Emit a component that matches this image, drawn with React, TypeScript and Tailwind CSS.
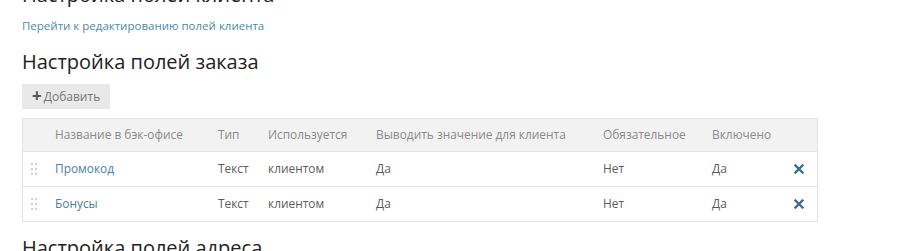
import React from "react";

const rows = [
  { name: "Промокод", type: "Текст", used: "клиентом", show: "Да", req: "Нет", on: "Да" },
  { name: "Бонусы", type: "Текст", used: "клиентом", show: "Да", req: "Нет", on: "Да" },
];

function Grip() {
  return (
    <svg width="6" height="12" viewBox="0 0 6 12" fill="#cfcfcf">
      <rect x="0" y="0" width="2" height="2" />
      <rect x="4" y="0" width="2" height="2" />
      <rect x="0" y="5" width="2" height="2" />
      <rect x="4" y="5" width="2" height="2" />
      <rect x="0" y="10" width="2" height="2" />
      <rect x="4" y="10" width="2" height="2" />
    </svg>
  );
}

function XIcon() {
  return (
    <svg width="10" height="10" viewBox="0 0 10 10">
      <path d="M1.5 1.5 L8.5 8.5 M8.5 1.5 L1.5 8.5" stroke="#3e6d8f" strokeWidth="2.4" strokeLinecap="square" />
    </svg>
  );
}

export default function App() {
  return (
    <div className="w-[900px] h-[251px] overflow-hidden bg-white pl-[22px] text-[#5c5c5c]" style={{ fontFamily: "'Open Sans', 'Noto Sans', sans-serif" }}>
      <h2 className="text-[20px] leading-[24px] text-[#222] -mt-[17px]">Настройка полей клиента</h2>
      <a className="block mt-[12px] text-[11.5px] leading-[14px] text-[#4a8aae]">Перейти к редактированию полей клиента</a>
      <h2 className="mt-[17px] text-[20px] leading-[24px] text-[#222]">Настройка полей заказа</h2>
      <button className="mt-[10px] h-[25px] w-[88px] flex items-center gap-[2px] bg-[#e9e9e9] pl-[10px] text-[12px] text-[#777]">
        <span className="text-[17px] leading-none font-bold text-[#555] -mt-[2px]">+</span>
        <span>Добавить</span>
      </button>
      <div className="mt-[9px] w-[796px] border border-[#e3e3e3] text-[11.9px]">
        <div className="flex h-[32px] items-center bg-[#f2f2f2] text-[#8a8a8a]">
          <div className="w-[32px]" />
          <div className="w-[163px]">Название в бэк-офисе</div>
          <div className="w-[50px]">Тип</div>
          <div className="w-[108px]">Используется</div>
          <div className="w-[227px]">Выводить значение для клиента</div>
          <div className="w-[109px]">Обязательное</div>
          <div className="flex-1">Включено</div>
        </div>
        {rows.map((r) => (
          <div key={r.name} className="flex h-[35px] items-center border-t border-[#e3e3e3]">
            <div className="w-[32px] pl-[8px] flex items-center"><Grip /></div>
            <div className="w-[163px] text-[#4a7fa6]">{r.name}</div>
            <div className="w-[50px]">{r.type}</div>
            <div className="w-[108px]">{r.used}</div>
            <div className="w-[227px]">{r.show}</div>
            <div className="w-[109px]">{r.req}</div>
            <div className="w-[82px]">{r.on}</div>
            <div className="flex items-center"><XIcon /></div>
          </div>
        ))}
      </div>
      <h2 className="mt-[14px] text-[20px] leading-[24px] text-[#222]">Настройка полей адреса</h2>
    </div>
  );
}
